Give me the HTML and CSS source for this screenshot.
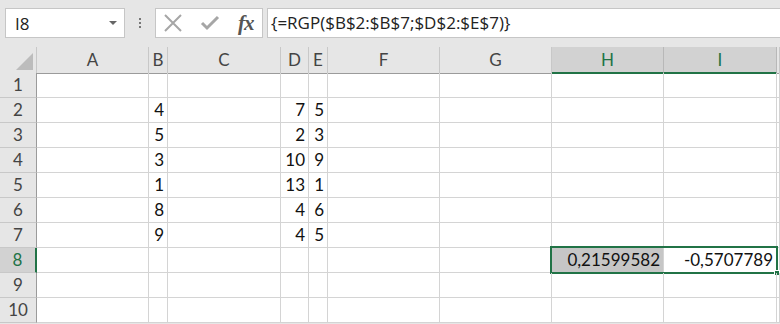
FILE: index.html
```html
<!DOCTYPE html>
<html lang="de">
<head>
  <meta charset="UTF-8">
  <title>Mappe1 - Excel</title>
  <link rel="stylesheet" href="styles.css">
</head>
<body>
  <div class="toolbar">
    <div class="namebox">
      <span>I8</span>
      <span class="drop"></span>
    </div>
    <div class="dots"><i></i><i></i><i></i></div>
    <div class="fxbox">
      <svg class="btn" width="20" height="20" viewBox="0 0 20 20">
        <path d="M2 2 L18 18 M18 2 L2 18" stroke="#a6a6a6" stroke-width="2" fill="none"/>
      </svg>
      <svg class="btn" width="20" height="20" viewBox="0 0 20 20">
        <path d="M2 10 L7 15 L18 4" stroke="#a6a6a6" stroke-width="3" fill="none"/>
      </svg>
      <span class="fx">fx</span>
    </div>
    <div class="formula">{=RGP($B$2:$B$7;$D$2:$E$7)}</div>
  </div>

  <div class="sheet">
    <div class="row head">
      <div class="corner"><span class="tri"></span></div>
      <div>A</div><div>B</div><div>C</div><div>D</div><div>E</div>
      <div>F</div><div>G</div><div class="on">H</div><div class="on">I</div><div></div>
    </div>
    <div class="row">
      <div class="rh">1</div>
      <div></div><div></div><div></div><div></div><div></div>
      <div></div><div></div><div></div><div></div><div></div>
    </div>
    <div class="row">
      <div class="rh">2</div>
      <div></div><div class="n">4</div><div></div><div class="n">7</div><div class="n">5</div>
      <div></div><div></div><div></div><div></div><div></div>
    </div>
    <div class="row">
      <div class="rh">3</div>
      <div></div><div class="n">5</div><div></div><div class="n">2</div><div class="n">3</div>
      <div></div><div></div><div></div><div></div><div></div>
    </div>
    <div class="row">
      <div class="rh">4</div>
      <div></div><div class="n">3</div><div></div><div class="n">10</div><div class="n">9</div>
      <div></div><div></div><div></div><div></div><div></div>
    </div>
    <div class="row">
      <div class="rh">5</div>
      <div></div><div class="n">1</div><div></div><div class="n">13</div><div class="n">1</div>
      <div></div><div></div><div></div><div></div><div></div>
    </div>
    <div class="row">
      <div class="rh">6</div>
      <div></div><div class="n">8</div><div></div><div class="n">4</div><div class="n">6</div>
      <div></div><div></div><div></div><div></div><div></div>
    </div>
    <div class="row">
      <div class="rh">7</div>
      <div></div><div class="n">9</div><div></div><div class="n">4</div><div class="n">5</div>
      <div></div><div></div><div></div><div></div><div></div>
    </div>
    <div class="row active">
      <div class="rh on">8</div>
      <div></div><div></div><div></div><div></div><div></div>
      <div></div><div></div><div class="n shade">0,21599582</div><div class="n">-0,5707789</div><div></div>
      <div class="selection"><span class="handle"></span></div>
    </div>
    <div class="row">
      <div class="rh">9</div>
      <div></div><div></div><div></div><div></div><div></div>
      <div></div><div></div><div></div><div></div><div></div>
    </div>
    <div class="row">
      <div class="rh">10</div>
      <div></div><div></div><div></div><div></div><div></div>
      <div></div><div></div><div></div><div></div><div></div>
    </div>
  </div>
</body>
</html>
```

FILE: styles.css
```css
* {
  box-sizing: border-box;
}
body {
  margin: 0;
  background: #e6e6e6;
  font-family: Lato, 'Open Sans', sans-serif;
  overflow: hidden;
}
.toolbar {
  height: 47px;
  display: flex;
  align-items: flex-start;
  padding-top: 8px;
}
.namebox {
  margin-left: 5px;
  width: 120px;
  height: 30px;
  background: #fff;
  border: 1px solid #c6c6c6;
  display: flex;
  align-items: center;
  justify-content: space-between;
  padding: 0 7px 0 9px;
  font-family: 'Open Sans', sans-serif;
  font-size: 17px;
  color: #222;
}
.drop {
  width: 0;
  height: 0;
  border-left: 4px solid transparent;
  border-right: 4px solid transparent;
  border-top: 4px solid #666;
}
.dots {
  margin: 10px 0 0 14px;
  width: 3px;
  display: flex;
  flex-direction: column;
  gap: 2px;
}
.dots i {
  width: 2px;
  height: 2px;
  background: #777;
}
.fxbox {
  margin-left: 13px;
  width: 108px;
  height: 30px;
  background: #fff;
  border: 1px solid #c6c6c6;
  display: flex;
  align-items: center;
  padding-left: 7px;
  gap: 17px;
}
.fx {
  font-family: 'Liberation Serif', serif;
  font-style: italic;
  font-weight: bold;
  font-size: 21px;
  color: #555;
  margin-left: 1px;
  letter-spacing: -1px;
}
.formula {
  margin-left: 4px;
  flex: 1;
  height: 30px;
  background: #fff;
  border: 1px solid #c6c6c6;
  border-right: none;
  padding: 2px 0 0 3px;
  font-family: 'Open Sans', sans-serif;
  font-size: 17px;
  color: #222;
}
.sheet {
  background: #fff;
}
.row {
  display: grid;
  grid-template-columns: 37px 112px 19px 113px 28px 19px 112px 112px 112px 113px 1fr;
  height: 25px;
  position: relative;
}
.row > div {
  border-right: 1px solid #d4d4d4;
  border-bottom: 1px solid #d4d4d4;
  font-size: 17px;
  line-height: 24px;
  color: #111;
  white-space: nowrap;
}
.row .n {
  text-align: right;
  padding-right: 3px;
}
.row .shade {
  background: #c6c6c6;
}
.head {
  height: 26px;
  background: #e6e6e6;
}
.head > div {
  text-align: center;
  color: #444;
  border-right-color: #c8c8c8;
  border-bottom-color: #9b9b9b;
  line-height: 25px;
}
.head > div.on {
  background: #d2d2d2;
  color: #217346;
  border-bottom: 2px solid #217346;
  border-right-color: #b8b8b8;
}
.corner {
  position: relative;
}
.tri {
  position: absolute;
  right: 3px;
  bottom: 3px;
  width: 0;
  height: 0;
  border-left: 17px solid transparent;
  border-bottom: 17px solid #bcbcbc;
}
.row .rh {
  background: #e6e6e6;
  text-align: center;
  color: #444;
  border-right-color: #9b9b9b;
  border-bottom-color: #c8c8c8;
}
.row .rh.on {
  background: #d2d2d2;
  color: #217346;
  border-right: 2px solid #217346;
}
.row > .selection {
  position: absolute;
  left: 550px;
  top: -2px;
  width: 228px;
  height: 28px;
  border: 2px solid #217346;
}
.handle {
  position: absolute;
  right: -4px;
  bottom: -4px;
  width: 6px;
  height: 6px;
  background: #217346;
  border: 1px solid #fff;
}
```
